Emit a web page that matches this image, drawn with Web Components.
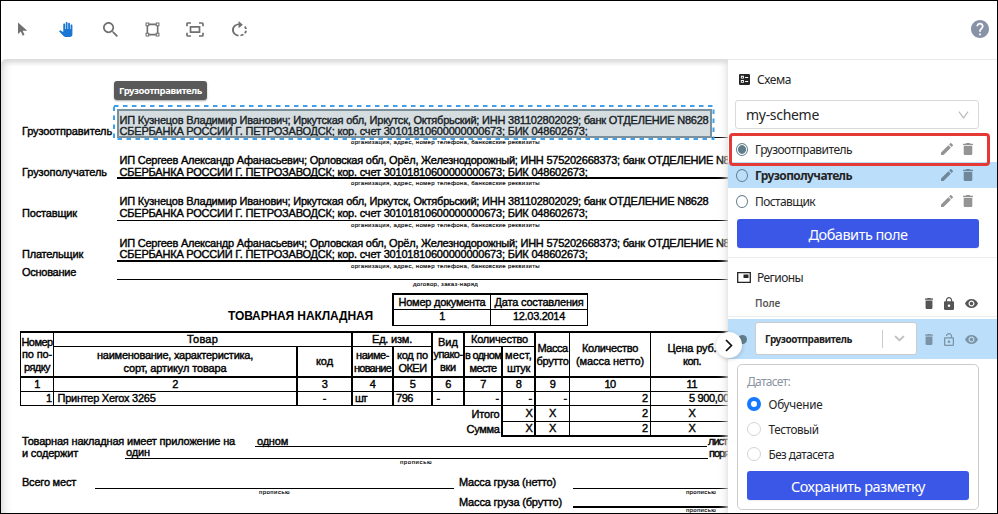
<!DOCTYPE html>
<html lang="ru"><head><meta charset="utf-8"><title>Разметка</title>
<style>html,body{margin:0;width:998px;height:514px;overflow:hidden;background:#fff}</style></head>
<body><markup-app></markup-app>
<script>
const define=(name,html,extra)=>customElements.define(name,class extends HTMLElement{
  connectedCallback(){
    if(!this.shadowRoot){this.attachShadow({mode:'open'}).innerHTML=typeof html==='function'?html(this):html;}
    if(extra)extra(this);
  }
});
// Text line whose tracking is adjusted to a given width
define('fit-text','<style>:host{display:inline-block;white-space:pre;flex:none}span{display:inline-block}</style><span><slot></slot></span>',el=>{
  const w=parseFloat(el.getAttribute('w')),s=el.shadowRoot.querySelector('span');
  if(!w)return;
  el.style.width=w+'px';
  const n=el.textContent.length;
  s.style.letterSpacing=((w-s.getBoundingClientRect().width)/n)+'px';
});
const T=(w,t)=>`<fit-text w="${w}">${t}</fit-text>`;

const icons={
 cursor:['0 0 10 14','<path d="M0 0.5V12l3-2.6 1.9 4.3 1.9-.9-1.9-4.1H9.6z"/>'],
 hand:['1 0 23 24','<path d="M23 5.5V20c0 2.2-1.8 4-4 4h-7.3c-1.08 0-2.1-.43-2.85-1.19L1 14.83s1.26-1.23 1.3-1.25c.22-.19.49-.29.79-.29.22 0 .42.06.6.16.04.01 4.31 2.46 4.31 2.46V4c0-.83.67-1.5 1.5-1.5S11 3.17 11 4v7h1V1.5c0-.83.67-1.5 1.5-1.5S15 .67 15 1.5V11h1V2.5c0-.83.67-1.5 1.5-1.5s1.5.67 1.5 1.5V11h1V5.5c0-.83.67-1.5 1.5-1.5s1.5.67 1.5 1.5z"/>'],
 search:['3 3 17.5 17.5','<path d="M15.5 14h-.79l-.28-.27C15.41 12.59 16 11.11 16 9.5 16 5.91 13.09 3 9.5 3S3 5.91 3 9.5 5.91 16 9.5 16c1.61 0 3.09-.59 4.23-1.57l.27.28v.79l5 4.99L20.49 19l-4.99-5zm-6 0C7.01 14 5 11.99 5 9.5S7.01 5 9.5 5 14 7.01 14 9.5 11.99 14 9.5 14z"/>'],
 box:['0 0 14 14','<g fill="none" stroke="currentColor"><path stroke-width="1.5" d="M3.5 2.2h7M3.5 11.8h7M2.2 3.5v7M11.8 3.5v7"/><path d="M1 1h2.5v2.5H1zM10.5 1H13v2.5h-2.5zM1 10.5h2.5V13H1zM10.5 10.5H13V13h-2.5z"/></g>'],
 fit:['0 0 18 16','<g fill="none" stroke="currentColor" stroke-width="1.7"><path d="M1 4.5V2q0-1 1-1h3M13 1h3q1 0 1 1v2.500M1 11.500V14q0 1 1 1h3M13 15h3q1 0 1-1v-2.500"/><path d="M4.500 5.200h9v5.600h-9z"/></g>'],
 rotate:['4 1 16 21','<path d="M15.55 5.55L11 1v3.070C7.060 4.560 4 7.920 4 12s3.050 7.440 7 7.930v-2.020c-2.840-.48-5-2.940-5-5.910s2.160-5.430 5-5.910V10l4.550-4.450zM19.930 11c-.17-1.390-.72-2.730-1.620-3.890l-1.420 1.420c.54.750.880 1.600 1.020 2.470h2.020zM13 17.900v2.020c1.390-.17 2.740-.71 3.900-1.610l-1.440-1.440c-.75.540-1.590.890-2.460 1.030zm3.890-2.420l1.420 1.410c.9-1.160 1.450-2.500 1.620-3.890h-2.020c-.14.870-.48 1.720-1.020 2.480z"/>'],
 help:['2 2 20 20','<path d="M12 2C6.480 2 2 6.480 2 12s4.480 10 10 10 10-4.480 10-10S17.520 2 12 2zm1 17h-2v-2h2v2zm2.070-7.750l-.9.920C13.450 12.900 13 13.500 13 15h-2v-.5c0-1.100.45-2.100 1.170-2.830l1.240-1.260c.37-.36.59-.86.59-1.410 0-1.100-.9-2-2-2s-2 .9-2 2H8c0-2.210 1.790-4 4-4s4 1.790 4 4c0 .88-.36 1.680-.93 2.250z"/>'],
 scheme:['3 3 18 18','<path fill-rule="evenodd" d="M5 3h14q2 0 2 2v14q0 2-2 2H5q-2 0-2-2V5q0-2 2-2zM13 8v1.500h5V8zM13 14.500V16h5v-1.500zM6 6v4.500h5V6zM7.500 7.500h2V9h-2zM6 13v4.500h5V13zM7.500 14.500h2V16h-2z"/>'],
 pip:['0 0 14 11','<path fill="none" stroke="currentColor" stroke-width="1.300" d="M.7.7h12.600v9.600H.7z"/><path d="M6.500 2.500H11.500v3.500h-5z"/>'],
 pencil:['3 3 18 18','<path d="M3 17.250V21h3.750L17.810 9.940l-3.750-3.750L3 17.250zM20.710 7.040c.39-.39.39-1.020 0-1.410l-2.340-2.340c-.39-.39-1.020-.39-1.410 0l-1.830 1.830 3.750 3.750 1.830-1.830z"/>'],
 trash:['5 3 14 18','<path d="M6 19c0 1.100.9 2 2 2h8c1.100 0 2-.9 2-2V7H6v12zM19 4h-3.500l-1-1h-5l-1 1H5v2h14V4z"/>'],
 lock:['4 1 16 21','<path d="M18 8h-1V6c0-2.760-2.240-5-5-5S7 3.240 7 6v2H6c-1.100 0-2 .9-2 2v10c0 1.100.9 2 2 2h12c1.100 0 2-.9 2-2V10c0-1.100-.9-2-2-2zm-6 9c-1.100 0-2-.9-2-2s.9-2 2-2 2 .9 2 2-.9 2-2 2zm3.100-9H8.900V6c0-1.710 1.390-3.100 3.100-3.100s3.100 1.390 3.100 3.100v2z"/>'],
 unlock:['4 1 16 21','<path d="M12 17c1.100 0 2-.9 2-2s-.9-2-2-2-2 .9-2 2 .9 2 2 2zm6-9h-1V6c0-2.760-2.240-5-5-5S7 3.240 7 6h1.900c0-1.710 1.390-3.100 3.100-3.100s3.100 1.390 3.100 3.100v2H6c-1.100 0-2 .9-2 2v10c0 1.100.9 2 2 2h12c1.100 0 2-.9 2-2V10c0-1.100-.9-2-2-2zm0 12H6V10h12v10z"/>'],
 eye:['1 4.500 22 15','<path d="M12 4.500C7 4.500 2.730 7.610 1 12c1.730 4.390 6 7.500 11 7.500s9.270-3.110 11-7.500c-1.730-4.390-6-7.500-11-7.500zM12 17c-2.760 0-5-2.240-5-5s2.240-5 5-5 5 2.240 5 5-2.240 5-5 5zm0-8c-1.660 0-3 1.340-3 3s1.340 3 3 3 3-1.340 3-3-1.340-3-3-3z"/>'],
 down:['0 0 12 8','<path fill="none" stroke="currentColor" stroke-width="1.300" d="M1 .7l5 6.300L11 .7"/>'],
 downb:['0 0 12 8','<path fill="none" stroke="currentColor" stroke-width="2" d="M1.200 1.200L6 6l4.800-4.800"/>'],
 right:['0 0 8 14','<path fill="none" stroke="currentColor" stroke-width="1.700" d="M1 1l5.500 6L1 13"/>']
};
define('ui-icon',el=>{const [vb,p]=icons[el.getAttribute('name')];
 return `<style>:host{display:block;flex:none;width:${el.getAttribute('w')}px;height:${el.getAttribute('h')}px}svg{display:block}</style><svg width="100%" height="100%" viewBox="${vb}" preserveAspectRatio="none" fill="currentColor">${p}</svg>`;});
const I=(n,w,h)=>`<ui-icon name="${n}" w="${w}" h="${h}"></ui-icon>`;

define('tool-bar',`<style>:host{display:flex;box-sizing:border-box;height:58px;align-items:center;padding:0 8px 2px 0;color:#707070}
.t{width:44px;display:flex;justify-content:center}.on{color:#1976d2}.h{margin-left:auto;color:#8993a8}</style>
<div class="t" style="width:43px">${I('cursor',9.5,14)}</div><div class="t on">${I('hand',14,15)}</div><div class="t">${I('search',15,15)}</div>
<div class="t" style="width:40px">${I('box',15,15)}</div><div class="t" style="width:46px">${I('fit',18,15)}</div><div class="t" style="width:42px">${I('rotate',15,17)}</div>
<div class="h">${I('help',18,18)}</div>`);

define('party-row',el=>{const g=a=>el.getAttribute(a);const two=g('l1');
 return `<style>:host{display:flex;height:${g('h')}px}
 .l{flex:none;width:95px;display:flex;align-items:flex-start;padding-top:${g('lt')}px;box-sizing:border-box}
 .c{flex:1;min-width:0}.b{height:${g('bh')}px;border-bottom:${g('bw')}px solid #000;padding-left:2.500px}.b fit-text{display:block}.s{margin-top:${g('gap')}px}
 .k{font-size:6px;line-height:8px;padding-left:${g('kx')}px;margin-top:-.500px;-webkit-text-stroke-width:.15px}</style>
 <div class="l">${T(g('lw'),g('label'))}</div><div class="c"><div class="b">${two?T(g('w1'),g('l1'))+`<div class="s">${T(468,'СБЕРБАНКА РОССИИ Г. ПЕТРОЗАВОДСК; кор. счет 30101810600000000673; БИК 048602673;')}</div>`:''}</div><div class="k">${T(g('kw'),g('k'))}</div></div>`;});
const K='Кузнецов Владимир Иванович; Иркутская обл, Иркутск, Октябрьский; ИНН 381102802029; банк ОТДЕЛЕНИЕ N8628',
      S='Сергеев Александр Афанасьевич; Орловская обл, Орёл, Железнодорожный; ИНН 575202668373; банк ОТДЕЛЕНИЕ N8',
      ORG='организация, адрес, номер телефона, банковские реквизиты';
const party=(label,lw,w1,l1,h,bh,bw,lt,gap)=>`<party-row label="${label}" lw="${lw}" w1="${w1}" l1="ИП ${l1}" h="${h}" bh="${bh}" bw="${bw}" lt="${lt}" gap="${gap}" kx="234" kw="189" k="${ORG}"></party-row>`;

// [row, column, lines, classes]
const cells=[
 ['1/3','1',[[31,'Номер'],[30,'по по-'],[26,'рядку']],'b2 p3'],['1','2/4',[[31,'Товар']],''],
 ['2','2',[[156,'наименование, характеристика,'],[103,'сорт, артикул товара']],'b2'],['2','3',[[17,'код']],'l2 b2'],
 ['1','4/6',[[40,'Ед. изм.']],'l2'],['2','4',[[33,'наиме-'],[37,'нование']],'l2 b2'],['2','5',[[31,'код по'],[28,'ОКЕИ']],'l2 b2'],
 ['1/3','6',[[20,'Вид'],[29,'упако-'],[16,'вки']],'l2 b2 p3'],['1','7/9',[[57,'Количество']],'l2'],
 ['2','7',[[36,'в одном'],[27,'месте']],'l2 b2'],['2','8',[[27,'мест,'],[23,'штук']],'l2 b2'],
 ['1/3','9',[[30,'Масса'],[32,'брутто']],'l2 b2'],['1/3','10',[[56,'Количество'],[68,'(масса нетто)']],'b2'],['1/3','11',[[49,'Цена руб.'],[18,'коп.']],'b2'],
 ...[1,2,3,4,5,6,7,8,9,10,11].map(n=>['3',''+n,[[n>9?11:5.5,''+n]],[3,4,5,6,7,8,9].includes(n)?'l2':'']),
 ['4','1',[[5.5,'1']],'r'],['4','2',[[98,'Принтер Xerox 3265']],'f'],['4','3',[[3.5,'-']],'l2'],['4','4',[[11,'шт']],'l2 f1'],['4','5',[[17,'796']],'l2 f1'],['4','6',[[4,'-']],'l2 f'],
 ['4','7',[[4,'-']],'l2 r'],['4','8',[[4,'-']],'l2 r'],['4','9',[[4,'-']],'l2 r'],['4','10',[[6.5,'2']],'r'],['4','11',[[40,'5 900,00']],'f39'],
 ['5','6/8',[[28,'Итого']],'n r'],['6','6/8',[[33,'Сумма']],'n r'],
 ...[5,6].flatMap(r=>[[''+r,'8',[[7,'X']],'l2 r'+(r==6?' b2':'')],[''+r,'9',[[7,'X']],'l2'+(r==6?' b2':'')],[''+r,'10',[[6.5,'2']],'r'+(r==6?' b2':'')],[''+r,'11',[[7,'X']],(r==6?'b2':'')]])
];
define('goods-table',`<style>:host{display:grid;margin-left:19px;width:713px;border-top:2px solid #000;grid-template-columns:33px 243px 55px 41px 39px 32px 38px 33px 35px 81px 83px;grid-template-rows:14px 31px 14px 14px 16px 15px}
.c{border:0 solid #000;border-width:0 0 1px 1px;display:flex;flex-direction:column;justify-content:center;align-items:center;line-height:12.500px;box-sizing:border-box;min-width:0}
.l2{border-left-width:2px}.b2{border-bottom-width:2px}.r{align-items:flex-end;padding-right:1.500px}.f{align-items:flex-start;padding-left:3.500px}.f1{align-items:flex-start;padding-left:2px}.f39{align-items:flex-start;padding-left:38px}.n{border:0}
</style>`+cells.map(([r,c,l,k])=>`<div class="c ${k}" style="grid-row:${r};grid-column:${c}">${l.map(x=>T(...x)).join('')}</div>`).join(''));

define('doc-number',`<style>:host{display:grid;box-sizing:border-box;width:196px;height:33px;border:solid #000;border-width:2px 1px 1px 2px;grid-template-columns:97px 1fr;grid-template-rows:15px 15px}
div{display:flex;align-items:center;justify-content:center}.u{border-bottom:1px solid #000}.v{border-right:1px solid #000}.w{padding-bottom:3px}</style>
<div class="u v">${T(87,'Номер документа')}</div><div class="u">${T(89,'Дата составления')}</div><div class="v w">${T(5.5,'1')}</div><div class="w">${T(52,'12.03.2014')}</div>`);

define('field-line',`<style>:host{display:block;box-sizing:border-box;border-bottom:1px solid #000;flex:none}</style><slot></slot>`);

define('doc-page',`<style>
:host{display:block;position:relative;box-sizing:border-box;width:727px;height:454px;overflow:hidden;background:#fff;border-top-left-radius:5px;font:11px/12px "Liberation Sans",Arial,sans-serif;color:#000;-webkit-text-stroke:.4px #000;padding-top:55px}
.shade{position:absolute;inset:0;border-top-left-radius:5px;box-shadow:inset 0 5px 4px -1px #dcdcdc,inset 9px 0 9px -6px #ddd,inset -8px 0 8px -6px #e4e4e4}
.sheet{padding-left:21px}.head{display:flex;height:38px;align-items:flex-start}.head .t{width:145px;margin:17px 19px 0 206px;font-weight:bold;font-size:12px;-webkit-text-stroke:0}
.foot{padding-left:21px}.row{display:flex;align-items:flex-start}.tiny{font-size:6px;line-height:7px;display:flex;height:7px;-webkit-text-stroke-width:.15px}
.sel{position:absolute;left:116px;top:50px;width:595px;height:29px;box-sizing:border-box;border:2px solid #7b909a;background:#607d8b42}
.dash{position:absolute;left:111px;top:45px}
.tip{position:absolute;left:113px;top:22px;width:93px;height:19px;box-sizing:border-box;border-radius:3px;background:#595959;color:#fff;font:bold 9.500px/19px "Noto Sans",sans-serif;text-align:center;-webkit-text-stroke:0;box-shadow:0 1px 2px #0005}
</style>
<div class="sheet">
${party('Грузоотправитель',90,589,K,40,23,1,11,-1)}
${party('Грузополучатель',85,610,S,41,23,2,12,0)}
${party('Поставщик',55,589,K,42,25,1,12,0)}
${party('Плательщик',61,610,S,29,23,2,11,-1)}
<party-row label="Основание" lw="54" h="27" bh="13" bw="1" lt="0" kx="296" kw="65" k="договор, заказ-наряд"></party-row>
<div class="head"><div class="t">${T(145,'ТОВАРНАЯ НАКЛАДНАЯ')}</div><doc-number></doc-number></div></div>
<goods-table></goods-table>
<div class="foot">
<div class="row" style="margin-top:-2px">${T(213,'Товарная накладная имеет приложение на')}<field-line style="width:452px;margin-left:20px;height:12px;padding-left:2px">${T(31,'одном')}</field-line><span style="margin-left:1px">${T(19,'лист')}</span></div>
<div class="row" style="padding-top:0">${T(56,'и содержит')}<field-line style="width:583px;margin-left:47px;height:12px;padding-left:1px;line-height:10px">${T(24,'один')}</field-line><span style="margin-left:1px">${T(20,'поря')}</span></div>
<div class="tiny" style="padding-left:378px;height:17px">${T(32,'прописью')}</div>
<div class="row">${T(54,'Всего мест')}<field-line style="width:359px;margin-left:19px;height:13px"></field-line><span style="margin-left:5px">${T(97,'Масса груза (нетто)')}</span><field-line style="width:155px;margin-left:17px;height:13px"></field-line></div>
<div class="tiny" style="padding-left:237px">${T(31,'прописью')}<span style="margin-left:396px">${T(30,'прописью')}</span></div>
<div class="row" style="padding-left:437px">${T(103,'Масса груза (брутто)')}<field-line style="width:155px;margin-left:11px;height:12px;border-bottom-width:2px"></field-line></div>
<div class="tiny" style="padding-left:664px;line-height:6px;margin-top:-1px">${T(30,'прописью')}</div>
</div>
<div class="sel"></div>
<svg class="dash" width="604" height="37"><rect x="2" y="2" width="599.5" height="33" fill="none" stroke="#42a0ea" stroke-width="2" stroke-dasharray="4.500 4.500"/></svg>
<div class="tip">${T(83,'Грузоотправитель')}</div><div class="shade"></div>`);

define('scheme-field',el=>{const b=el.hasAttribute('active'),c=el.hasAttribute('checked');
return `<style>:host{display:flex;box-sizing:border-box;height:26px;align-items:center;padding:0 24px 0 8px;font-size:12px;${b?'background:#bbdefb;font-weight:bold;':''}}
i{box-sizing:border-box;width:12px;height:13px;border:1.200px solid #607d8b;border-radius:50%;margin-right:7px;${c?'background:radial-gradient(#607d8b 0 3.600px,#fff 4.300px);':''}}
::slotted(*){padding-top:2px}
.a{margin-left:auto;display:flex;gap:10px;color:${b?'#6f8799':'#949494'}}</style><i></i><slot></slot><div class="a">${I('pencil',12,12)}${I('trash',10,12)}</div>`;});
define('primary-button',`<style>:host{display:flex;height:29px;align-items:center;justify-content:center;border-radius:3px;background:#3b57e8;color:#fff;font-size:14.500px;box-shadow:0 1px 1px #0001}</style><slot></slot>`);
define('radio-item',el=>`<style>:host{display:flex;align-items:center;height:24.800px;font-size:11.700px}i{box-sizing:border-box;width:14px;height:14px;border-radius:50%;margin-right:7.500px;border:${el.hasAttribute('checked')?'4.500px solid #1677ff':'1px solid #d4d4d4'}}</style><i></i><slot></slot>`);

define('side-panel',`<style>
:host{display:block;box-sizing:border-box;width:269px;height:454px;border-top:1px solid #e9e9e9;font:12px/16px "Noto Sans","Open Sans",sans-serif;color:#252525;background:#fff}
.title{display:flex;align-items:center;height:20px}
.title fit-text{padding-top:1px}
.select{display:flex;align-items:center;justify-content:space-between;box-sizing:border-box;width:244px;height:29px;margin:11px 0 0 7px;border:1px solid #d9d9d9;border-radius:3px;padding:0 9px 0 10px;font-size:14px}
.select ui-icon,.rs ui-icon{color:#bdbdbd}
.list{position:relative;padding-top:7px}.mark{position:absolute;left:1px;top:4px;width:261px;height:33px;box-sizing:border-box;border:3px solid #e53935;border-radius:4px}
.hr{height:1px;background:#ededed}
.head{display:flex;height:24px;align-items:center;padding-left:27px;font-size:10px;font-weight:600;color:#555}
.ic{display:flex;gap:11px;align-items:center;margin-left:auto;padding-right:19px}
.reg{display:flex;align-items:center;box-sizing:border-box;height:40px;margin-top:2px;background:#bbdefb;padding-left:10px;color:#7b93a3}
.dot{width:9px;height:9px;border-radius:50%;background:#607d8b;margin-right:8px}
.rs{display:flex;align-items:center;box-sizing:border-box;width:162px;height:33px;background:#fff;border:1px solid #ccc;border-radius:3px;padding-left:9px;font:bold 10px/14px "Noto Sans",sans-serif;color:#222;margin-top:-1px}
.sep{width:1px;height:18px;background:#ccc;margin:0 11px 0 30px}
.data{box-sizing:border-box;margin:5px 18px 0 9px;height:146px;border:1px solid #ccc;border-radius:5px;padding:9px 9px 0}
</style>
<div class="title" style="padding:9px 0 0 11px"><span style="margin-right:7px">${I('scheme',11,11)}</span>${T(34,'Схема')}</div>
<div class="select">${T(73,'my-scheme')}${I('down',11,8)}</div>
<div class="list"><scheme-field checked>${T(97,'Грузоотправитель')}</scheme-field><scheme-field active>${T(97,'Грузополучатель')}</scheme-field><scheme-field>${T(60,'Поставщик')}</scheme-field><div class="mark"></div></div>
<primary-button style="margin:5px 18px 9px 9px">${T(99,'Добавить поле')}</primary-button>
<div class="hr"></div>
<div class="title" style="padding:9px 0 0 9px"><span style="margin-right:6px">${I('pip',14,11)}</span>${T(46,'Регионы')}</div>
<div class="head" style="padding-top:4px;padding-bottom:1px">${T(25,'Поле')}<div class="ic">${I('trash',8,11)}${I('lock',10,13)}${I('eye',13,9)}</div></div>
<div class="hr"></div>
<div class="reg"><div class="dot"></div><div class="rs">${T(87,'Грузоотправитель')}<div class="sep"></div>${I('downb',11,7)}</div><div class="ic">${I('trash',8,11)}${I('unlock',10,13)}${I('eye',13,9)}</div></div>
<div class="data"><div style="color:#8b95a1;height:18px">${T(43,'Датасет:')}</div>
<radio-item checked>${T(54,'Обучение')}</radio-item><radio-item>${T(50,'Тестовый')}</radio-item><radio-item>${T(65.5,'Без датасета')}</radio-item>
<primary-button style="margin-top:5px">${T(134,'Сохранить разметку')}</primary-button></div>`);

define('markup-app',`<style>:host{display:block;position:relative;box-sizing:border-box;width:998px;height:514px;border:1px solid #000;background:#fff;overflow:hidden}
.m{display:flex}.tog{position:absolute;left:715px;top:331px;width:26px;height:26px;border-radius:50%;background:#fff;box-shadow:0 1px 4px #0003;display:flex;align-items:center;justify-content:center;color:#111}</style>
<tool-bar></tool-bar><div class="m"><doc-page></doc-page><side-panel></side-panel></div><div class="tog">${I('right',8,13)}</div>`);
</script></body></html>
